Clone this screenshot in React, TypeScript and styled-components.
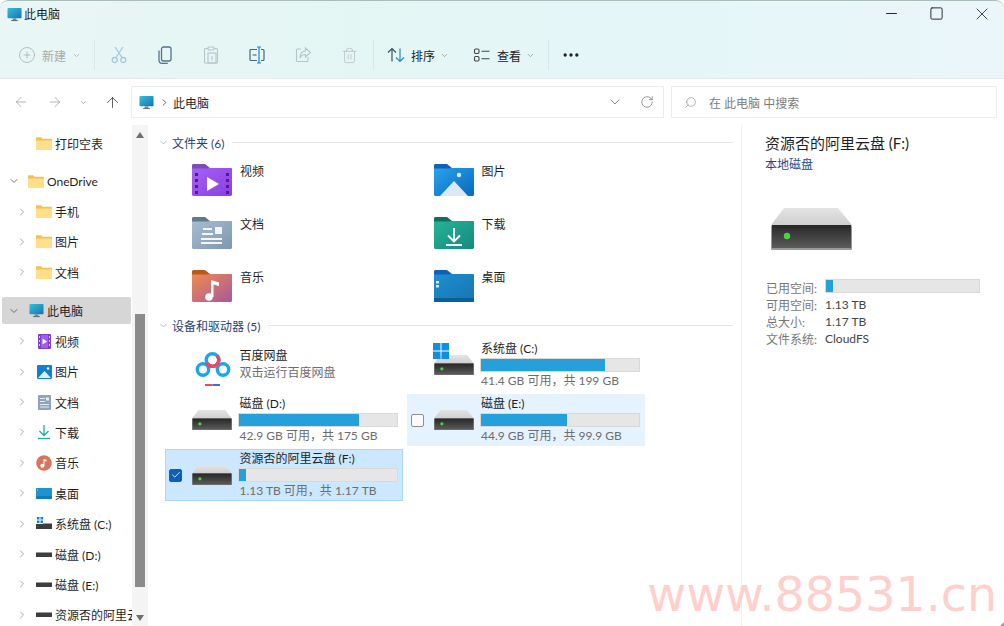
import React from 'react';
import styled, { createGlobalStyle } from 'styled-components';
import {
  ArrowLeft,
  ArrowRight,
  ArrowUp,
  Check,
  ChevronDown,
  ChevronRight,
  CirclePlus,
  Minus,
  MoreHorizontal,
  RotateCw,
  Search,
  Square,
  Trash2,
  X,
} from 'lucide-react';

const GlobalStyle = createGlobalStyle`
  html, body {
    margin: 0;
    padding: 0;
    background: #fff;
  }
  body {
    font-family: "Lato", "Noto Sans CJK SC", sans-serif;
    font-size: 12px;
    color: #1f1f1f;
    overflow: hidden;
  }
`;

const Window = styled.div`
  position: relative;
  width: 1004px;
  height: 626px;
  overflow: hidden;
  display: flex;
  flex-direction: column;
  background: #fff;
  border-radius: 8px 8px 0 0;
`;

const Chrome = styled.div`
  height: 79px;
  box-sizing: border-box;
  border-top: 1px solid #a9bdb9;
  border-bottom: 1px solid #e3e9e9;
  border-radius: 8px 8px 0 0;
  background: linear-gradient(90deg, #e9f6f6, #e4f6f4 35%, #e5f6f9 70%, #ebf6f9);
  display: flex;
  flex-direction: column;
`;

const TitleBar = styled.div`
  height: 27px;
  display: flex;
  align-items: center;
  padding-left: 7px;
  font-size: 12px;
`;

const TitleText = styled.span`
  flex: 1;
  margin: 0 0 2px 2px;
`;

const WindowButton = styled.div`
  width: 45px;
  height: 27px;
  margin-bottom: 2px;
  display: flex;
  align-items: center;
  justify-content: center;
  color: #222;
`;

const Toolbar = styled.div`
  flex: 1;
  display: flex;
  align-items: center;
  padding: 4px 0 0 18px;
`;

const Separator = styled.div<{ $left: number; $right: number }>`
  width: 1px;
  height: 30px;
  background: #dbe6e6;
  margin-left: ${(p) => p.$left}px;
  margin-right: ${(p) => p.$right}px;
`;

const NewButton = styled.div`
  display: flex;
  align-items: center;
  gap: 6px;
  color: #a3abad;
`;

const IconButton = styled.div<{ $color: string }>`
  width: 46px;
  height: 30px;
  display: flex;
  align-items: center;
  justify-content: center;
  color: ${(p) => p.$color};
`;

const TextButton = styled.div<{ $gapAfter: number }>`
  display: flex;
  align-items: center;
  gap: 6px;
  margin-right: ${(p) => p.$gapAfter}px;
  color: #222;
`;

const SmallChevron = styled(ChevronDown)`
  margin-left: -1px;
  color: #8a9496;
`;

const MoreButton = styled.div`
  margin-left: 12px;
  display: flex;
  color: #222;
`;

const AddressRow = styled.div`
  height: 46px;
  flex: none;
  display: flex;
  align-items: center;
  box-sizing: border-box;
  padding-right: 7px;
`;

const NavButtons = styled.div`
  width: 131px;
  height: 100%;
  flex: none;
  display: flex;
  align-items: center;
`;

const NavButton = styled.div<{ $width: number; $color: string }>`
  width: ${(p) => p.$width}px;
  display: flex;
  justify-content: center;
  color: ${(p) => p.$color};
`;

const AddressBar = styled.div`
  width: 533px;
  height: 32px;
  box-sizing: border-box;
  border: 1px solid #ececec;
  display: flex;
  align-items: center;
  padding-left: 7px;
  flex: none;
`;

const PathChevron = styled(ChevronRight)`
  margin: 0 3px 0 5px;
  color: #555;
`;

const PathText = styled.span`
  flex: 1;
`;

const AddressAction = styled.div<{ $width: number }>`
  width: ${(p) => p.$width}px;
  display: flex;
  justify-content: center;
  color: #6b6b6b;
`;

const SearchBox = styled.div`
  margin-left: 7px;
  flex: 1;
  height: 32px;
  box-sizing: border-box;
  border: 1px solid #ececec;
  display: flex;
  align-items: center;
  padding-left: 12px;
  gap: 12px;
  color: #7b7b7b;
`;

const FlippedSearch = styled(Search)`
  transform: scaleX(-1);
  color: #8a8a8a;
`;

const Body = styled.div`
  flex: 1;
  min-height: 0;
  display: flex;
`;

const Nav = styled.div`
  width: 132px;
  flex: none;
  overflow: hidden;
  padding-top: 3px;
  box-sizing: border-box;
`;

const NavRow = styled.div<{ $gap?: number }>`
  height: 30.4px;
  margin-top: ${(p) => p.$gap ?? 0}px;
  padding: 1.7px 1px 1.7px 2px;
  box-sizing: border-box;
`;

const NavInner = styled.div<{ $depth: number; $selected?: boolean }>`
  height: 100%;
  display: flex;
  align-items: center;
  padding-left: ${(p) => (p.$depth === 1 ? 14 : 6)}px;
  background: ${(p) => (p.$selected ? '#d6d6d6' : 'transparent')};
  border-radius: 2px;
  white-space: nowrap;
`;

const NavChevron = styled.div<{ $open?: boolean }>`
  width: 14px;
  flex: none;
  display: flex;
  color: ${(p) => (p.$open ? '#333' : '#6f6f6f')};
`;

const NavIcon = styled.div`
  width: 16px;
  height: 16px;
  flex: none;
  margin: 0 3px 0 6px;
  display: flex;
  align-items: center;
  justify-content: center;
`;

const ScrollTrack = styled.div`
  width: 16px;
  flex: none;
  background: #f4f4f4;
  display: flex;
  flex-direction: column;
  align-items: center;
  position: relative;
`;

const ScrollArrow = styled.div<{ $down?: boolean }>`
  margin-top: ${(p) => (p.$down ? 'auto' : '7px')};
  margin-bottom: ${(p) => (p.$down ? '5px' : '0')};
  width: 0;
  height: 0;
  border-left: 4px solid transparent;
  border-right: 4px solid transparent;
  border-bottom: ${(p) => (p.$down ? 'none' : '6px solid #6f6f6f')};
  border-top: ${(p) => (p.$down ? '6px solid #6f6f6f' : 'none')};
`;

const ScrollThumb = styled.div`
  margin-top: 176px;
  width: 10px;
  height: 273px;
  background: #8b8b8b;
`;

const Main = styled.div`
  width: 593px;
  flex: none;
  box-sizing: border-box;
  padding: 9px 8px 0 10px;
`;

const SectionHeader = styled.div<{ $after: number }>`
  height: 16px;
  display: flex;
  align-items: center;
  gap: 3px;
  margin-bottom: ${(p) => p.$after}px;
  color: #2b3f73;
`;

const SectionChevron = styled(ChevronDown)`
  color: #7b8190;
`;

const SectionLine = styled.div`
  flex: 1;
  height: 1px;
  background: #e4e4e4;
  margin-left: 5px;
`;

const TileGrid = styled.div<{ $rowGap: number }>`
  display: grid;
  grid-template-columns: 238px 238px;
  column-gap: 3.5px;
  row-gap: ${(p) => p.$rowGap}px;
  margin-left: 7px;
`;

const FolderTile = styled.div`
  height: 50px;
  display: flex;
  align-items: flex-start;
  gap: 8px;
  padding: 3px 0 0 27px;
  box-sizing: border-box;
  line-height: 15px;
`;

const DriveTile = styled.div<{ $state?: 'hover' | 'selected' }>`
  height: 52px;
  box-sizing: border-box;
  display: flex;
  align-items: center;
  border: 1px solid
    ${(p) => (p.$state === 'selected' ? '#a9d8fb' : p.$state === 'hover' ? '#e5f3ff' : 'transparent')};
  background: ${(p) => (p.$state === 'selected' ? '#cce8ff' : p.$state === 'hover' ? '#e5f3ff' : 'transparent')};
`;

const CheckSlot = styled.div`
  width: 26px;
  flex: none;
  padding-left: 3px;
  box-sizing: border-box;
`;

const CheckBox = styled.div<{ $checked?: boolean }>`
  width: 13px;
  height: 13px;
  box-sizing: border-box;
  border-radius: 2px;
  display: flex;
  align-items: center;
  justify-content: center;
  border: 1px solid ${(p) => (p.$checked ? '#0f5fb8' : '#8f8f8f')};
  background: ${(p) => (p.$checked ? '#0f5fb8' : '#fafafa')};
  color: #fff;
`;

const TileIcon = styled.div`
  position: relative;
  width: 40px;
  height: 50px;
  flex: none;
  margin-right: 7px;
  display: flex;
  align-items: center;
  justify-content: center;
`;

const WinBadge = styled.svg`
  position: absolute;
  left: -1px;
  top: 3px;
`;

const TileText = styled.div`
  width: 160px;
  flex: none;
  margin: -2px 0 0 -1px;
`;

const TileName = styled.div`
  height: 17px;
  line-height: 17px;
  margin-bottom: 1px;
  padding-left: 1.5px;
  white-space: nowrap;
`;

const Bar = styled.div<{ $width?: number; $height?: number }>`
  width: ${(p) => p.$width ?? 160}px;
  height: ${(p) => p.$height ?? 14}px;
  box-sizing: border-box;
  background: #e6e6e6;
  border: 1px solid #d9d9d9;
`;

const PropertyBar = styled(Bar)`
  align-self: start;
`;

const BarFill = styled.div`
  height: 100%;
  background: #26a0da;
`;

const TileSub = styled.div`
  height: 17px;
  line-height: 18px;
  padding-left: 1.5px;
  color: #6d6d6d;
  white-space: nowrap;
`;

const BaiduName = styled.div`
  line-height: 17px;
  padding-left: 1.5px;
`;

const BaiduSub = styled(BaiduName)`
  color: #6d6d6d;
`;

const Details = styled.div`
  flex: 1;
  border-left: 1px solid #f1f1f1;
  padding: 8px 0 0 23px;
`;

const DetailsTitle = styled.div`
  font-size: 15px;
  line-height: 20px;
`;

const DetailsType = styled.div`
  margin-top: 2px;
  line-height: 20px;
  color: #1f4a8a;
`;

const DetailsDrive = styled.div`
  margin: 33px 0 29px 6px;
  height: 42px;
`;

const Properties = styled.div`
  display: grid;
  grid-template-columns: 59px 155px;
  grid-auto-rows: 17px;
  align-items: center;
  margin-left: 1px;
`;

const PropertyName = styled.div`
  color: #777;
`;

const PropertyValue = styled.div`
  color: #444;
`;

const Watermark = styled.div`
  position: absolute;
  right: 7px;
  bottom: 5px;
  font-family: "DejaVu Sans", sans-serif;
  font-size: 47.5px;
  line-height: 52px;
  color: #ffd0cb;
  white-space: nowrap;
`;

const ResizeGrip = styled.div`
  position: absolute;
  right: 0;
  bottom: 0;
  width: 0;
  height: 0;
  border-left: 4px solid transparent;
  border-bottom: 4px solid #9a9a9a;
`;

// ---- drawn icons ----

const Computer = ({ size = 15 }: { size?: number }) => (
  <svg width={size} height={size} viewBox="0 0 16 16">
    <defs>
      <linearGradient id="screen" x1="0" y1="0" x2="1" y2="1">
        <stop offset="0" stopColor="#35c1d8" />
        <stop offset="1" stopColor="#1573b8" />
      </linearGradient>
    </defs>
    <rect x="0.5" y="1" width="15" height="11" rx="1" fill="url(#screen)" />
    <rect x="6" y="12" width="4" height="2" fill="#7b8a94" />
    <rect x="4.5" y="14" width="7" height="1" fill="#4f5d68" />
  </svg>
);

const SmallFolder = () => (
  <svg width="16" height="13" viewBox="0 0 16 13">
    <path d="M0 1.200C0 .6.4.2 1 .2h4l1.600 1.600H15c.6 0 1 .4 1 1V12c0 .6-.4 1-1 1H1c-.6 0-1-.4-1-1z" fill="#f4c04f" />
    <path d="M0 3.600h15c.6 0 1 .4 1 1V12c0 .6-.4 1-1 1H1c-.6 0-1-.4-1-1z" fill="#ffdf8a" />
  </svg>
);

const SmallVideo = () => (
  <svg width="13" height="15" viewBox="0 0 13 15">
    <rect width="13" height="15" rx="1" fill="#7b3fd0" />
    <rect x="3" y="1" width="7" height="13" fill="#a45cf0" />
    <path d="M4.500 4.500l4.500 3-4.500 3z" fill="#fff" />
    <path d="M1 2h1v2H1zm0 4h1v2H1zm0 4h1v2H1zm10-8h1v2h-1zm0 4h1v2h-1zm0 4h1v2h-1z" fill="#e4d4fa" />
  </svg>
);

const SmallPicture = () => (
  <svg width="15" height="14" viewBox="0 0 15 14">
    <rect width="15" height="14" rx="1" fill="#0f7fd0" />
    <path d="M1 13l6.500-7 6.500 7z" fill="#dfeefa" />
    <circle cx="11" cy="3.500" r="1.200" fill="#fff" />
  </svg>
);

const SmallDocument = () => (
  <svg width="13" height="15" viewBox="0 0 13 15">
    <rect width="13" height="15" rx="1" fill="#8fa3bd" />
    <path d="M2 3h5v1H2zm0 3h5v1H2zm0 3h9v1H2zm0 2.500h9v1H2z" fill="#e6edf5" />
    <rect x="8" y="2.500" width="3" height="3" fill="#e6edf5" />
  </svg>
);

const SmallDownload = () => (
  <svg width="16" height="16" viewBox="0 0 16 16" fill="none" stroke="#22a9a0" strokeWidth="1.300">
    <path d="M8 1v10M3.500 7L8 11.500 12.500 7" />
    <path d="M2 14.500h12" />
  </svg>
);

const SmallMusic = () => (
  <svg width="16" height="16" viewBox="0 0 16 16">
    <circle cx="8" cy="8" r="7.800" fill="#d9755f" />
    <circle cx="6.300" cy="10.800" r="2" fill="#fff" />
    <path d="M7.500 10.800V4l3 .8v1.700l-2-.5v4.800z" fill="#fff" />
  </svg>
);

const SmallDesktop = () => (
  <svg width="16" height="11" viewBox="0 0 16 11">
    <rect width="16" height="11" rx="0.500" fill="#1f93cf" />
    <rect y="8" width="16" height="3" fill="#157bb4" />
    <rect x="1" y="1.500" width="1" height="1" fill="#bfe6f7" />
  </svg>
);

const SmallDrive = () => (
  <svg width="16" height="5" viewBox="0 0 16 5">
    <rect width="16" height="5" rx="0.500" fill="#3e3e3e" />
    <rect width="16" height="1" fill="#9b9b9b" />
  </svg>
);

const SmallSystemDrive = () => (
  <svg width="16" height="13" viewBox="0 0 16 13">
    <path d="M1 0h2.500v2.500H1zm3.500 0H7v2.500H4.500zM1 3.500h2.500V6H1zm3.500 0H7V6H4.500z" fill="#1580cf" />
    <rect y="7" width="16" height="5" fill="#3e3e3e" />
    <rect x="7" y="6" width="9" height="1" fill="#9b9b9b" />
  </svg>
);

const Drive = ({ width, id }: { width: number; id: string }) => (
  <svg width={width} height={(width * 42) / 81} viewBox="0 0 81 42">
    <defs>
      <linearGradient id={`front-${id}`} x1="0" y1="0" x2="0" y2="1">
        <stop offset="0" stopColor="#262626" />
        <stop offset="1" stopColor="#5c5c5c" />
      </linearGradient>
      <linearGradient id={`top-${id}`} x1="0" y1="0" x2="0" y2="1">
        <stop offset="0" stopColor="#e4e4e4" />
        <stop offset="1" stopColor="#cfcfcf" />
      </linearGradient>
    </defs>
    <path d="M13 0h54l14 17H0z" fill={`url(#top-${id})`} />
    <rect x="0" y="17" width="81" height="25" rx="1.500" fill="#9a9a9a" />
    <rect x="1" y="17" width="79" height="23" fill={`url(#front-${id})`} />
    <circle cx="16" cy="28" r="3.200" fill="#46d63f" />
  </svg>
);

const FolderArt = ({
  id,
  tab,
  from,
  to,
  children,
}: {
  id: string;
  tab: string;
  from: string;
  to: string;
  children: React.ReactNode;
}) => (
  <svg width="40" height="32" viewBox="0 0 40 32">
    <defs>
      <linearGradient id={id} x1="0" y1="0" x2="1" y2="1">
        <stop offset="0" stopColor={from} />
        <stop offset="1" stopColor={to} />
      </linearGradient>
    </defs>
    <path d="M0 1.500C0 .7.700 0 1.500 0H13l5 4h20.500c.8 0 1.500.7 1.500 1.500V10H0z" fill={tab} />
    <path
      d="M0 4.500h18l-2.500-.5h23c.8 0 1.500.7 1.500 1.500v25c0 .8-.7 1.500-1.500 1.500h-37C.7 32 0 31.300 0 30.500z"
      fill={`url(#${id})`}
    />
    {children}
  </svg>
);

const VideoFolder = () => (
  <FolderArt id="fv" tab="#7a4cc0" from="#a860f5" to="#8a3fe0">
    <path d="M15 13l12 7-12 7z" fill="#fff" />
    <path
      d="M3 9h3v3H3zm0 6h3v3H3zm0 6h3v3H3zm0 6h3v3H3zm31-18h3v3h-3zm0 6h3v3h-3zm0 6h3v3h-3zm0 6h3v3h-3z"
      fill="#4a1f8c"
    />
  </FolderArt>
);

const PictureFolder = () => (
  <FolderArt id="fp" tab="#0d62b8" from="#2aa3ea" to="#0668c0">
    <path d="M6 32L20 17l14 15z" fill="#dbe8f5" />
    <circle cx="25" cy="11" r="2.200" fill="#d8eefb" />
  </FolderArt>
);

const DocumentFolder = () => (
  <FolderArt id="fd" tab="#5f7a8e" from="#a7bccf" to="#7d97b3">
    <path d="M11 11h9v2h-9zm-1 5h11v2H10zm-1 5h21v2H9zm0 4h21v2H9z" fill="#f2f6fa" />
    <rect x="23" y="10" width="7" height="7" fill="#f2f6fa" />
  </FolderArt>
);

const DownloadFolder = () => (
  <FolderArt id="fl" tab="#0f6f5f" from="#26b395" to="#168a80">
    <path d="M20 11v13M14 18.500l6 6 6-6M12 28h16" fill="none" stroke="#fff" strokeWidth="1.800" />
  </FolderArt>
);

const MusicFolder = () => (
  <FolderArt id="fm" tab="#b9591a" from="#f08a50" to="#a8589a">
    <circle cx="17" cy="27" r="3.800" fill="#fff" />
    <path d="M19 27V10l8 2.500v3.500l-5.500-1.500V27z" fill="#fff" />
  </FolderArt>
);

const DesktopFolder = () => (
  <FolderArt id="fk" tab="#0d62b8" from="#1f8fd0" to="#1675b0">
    <rect x="0" y="28" width="40" height="4" fill="#0e5f98" />
    <path d="M2 11h3v2.500H2zm0 4h3v2.500H2z" fill="#cdeaf8" />
  </FolderArt>
);

const BaiduLogo = () => (
  <svg width="40" height="50" viewBox="0 0 40 50" fill="none">
    <circle cx="11" cy="29.500" r="5.700" stroke="#18a7ee" strokeWidth="3.400" />
    <circle cx="31" cy="29.500" r="5.700" stroke="#18a7ee" strokeWidth="3.400" />
    <circle cx="20.500" cy="20" r="6.300" stroke="#18a7ee" strokeWidth="3.400" />
    <path d="M14.700 22.500a6.300 6.300 0 0 0 11.600 0" stroke="#f0455b" strokeWidth="3.400" />
    <path d="M25 15.600a6.300 6.300 0 0 1 1.300 6.900" stroke="#f0455b" strokeWidth="3.400" />
    <path d="M13 45h7.500" stroke="#f0455b" strokeWidth="2" />
    <path d="M20.500 45H28" stroke="#3f6fd8" strokeWidth="2" />
  </svg>
);

const CutIcon = () => (
  <svg width="18" height="18" viewBox="0 0 18 18" fill="none" stroke="currentColor" strokeWidth="1.300">
    <circle cx="4.700" cy="14" r="2.500" />
    <circle cx="13.300" cy="14" r="2.500" />
    <path d="M5.800 11.800L13 1M12.200 11.800L5 1" />
  </svg>
);

const CopyIcon = () => (
  <svg width="18" height="18" viewBox="0 0 18 18" fill="none" stroke="currentColor" strokeWidth="1.300">
    <rect x="5.500" y="1" width="9.500" height="14" rx="2" />
    <path d="M3 4.500V14c0 2 1.300 3.300 3.300 3.300h5.500" />
  </svg>
);

const PasteIcon = () => (
  <svg width="18" height="18" viewBox="0 0 18 18" fill="none" stroke="currentColor" strokeWidth="1.100">
    <path d="M6 2.500H3.500a1 1 0 0 0-1 1V16a1 1 0 0 0 1 1h11a1 1 0 0 0 1-1V3.500a1 1 0 0 0-1-1H12" />
    <rect x="6" y="1" width="6" height="3" rx="0.800" />
    <rect x="6" y="7" width="8" height="10" />
    <path d="M10 10v4.500" />
  </svg>
);

const RenameIcon = () => (
  <svg width="18" height="18" viewBox="0 0 18 18" fill="none" strokeWidth="1.200">
    <path d="M9 3.500H3a1 1 0 0 0-1 1v9a1 1 0 0 0 1 1h6M13 3.500h2a1 1 0 0 1 1 1v9a1 1 0 0 1-1 1h-2" stroke="#4a6478" />
    <path d="M4.500 9h4" stroke="#4a6478" />
    <path d="M11 1v16M9 1h4M9 17h4" stroke="#1c86c8" />
  </svg>
);

const ShareIcon = () => (
  <svg width="18" height="18" viewBox="0 0 18 18" fill="none" stroke="currentColor" strokeWidth="1.100">
    <path d="M7 3H3.500a1 1 0 0 0-1 1v10.500a1 1 0 0 0 1 1H13a1 1 0 0 0 1-1V11" />
    <path d="M11.500 2l5 4.500-5 4.500V8.500C9 8.500 7 9.500 6 12c0-4 2-6.800 5.500-7z" />
  </svg>
);

const SortIcon = () => (
  <svg width="18" height="18" viewBox="0 0 18 18" fill="none" strokeWidth="1.200">
    <path d="M5 15.500V2.500M1 6.500l4-4 4 4" stroke="#3f4f5c" />
    <path d="M13 2.500v13M9 11.500l4 4 4-4" stroke="#2a86d0" />
  </svg>
);

const ViewIcon = () => (
  <svg width="18" height="18" viewBox="0 0 18 18" fill="none" stroke="#444" strokeWidth="1.100">
    <rect x="1.500" y="3" width="4.500" height="4.500" rx="1.200" />
    <rect x="1.500" y="10.500" width="4.500" height="4.500" rx="1.200" />
    <path d="M8.500 5.200h8M8.500 12.700h8" />
  </svg>
);

const folders = [
  { name: '视频', icon: <VideoFolder /> },
  { name: '图片', icon: <PictureFolder /> },
  { name: '文档', icon: <DocumentFolder /> },
  { name: '下载', icon: <DownloadFolder /> },
  { name: '音乐', icon: <MusicFolder /> },
  { name: '桌面', icon: <DesktopFolder /> },
];

const navItems: {
  name: string;
  depth: number;
  icon: React.ReactNode;
  open?: boolean;
  selected?: boolean;
  gap?: number;
  noChevron?: boolean;
}[] = [
  { name: '打印空表', depth: 1, icon: <SmallFolder />, noChevron: true },
  { name: 'OneDrive', depth: 0, icon: <SmallFolder />, open: true, gap: 7.6 },
  { name: '手机', depth: 1, icon: <SmallFolder /> },
  { name: '图片', depth: 1, icon: <SmallFolder /> },
  { name: '文档', depth: 1, icon: <SmallFolder /> },
  { name: '此电脑', depth: 0, icon: <Computer />, open: true, selected: true, gap: 8.2 },
  { name: '视频', depth: 1, icon: <SmallVideo /> },
  { name: '图片', depth: 1, icon: <SmallPicture /> },
  { name: '文档', depth: 1, icon: <SmallDocument /> },
  { name: '下载', depth: 1, icon: <SmallDownload /> },
  { name: '音乐', depth: 1, icon: <SmallMusic /> },
  { name: '桌面', depth: 1, icon: <SmallDesktop /> },
  { name: '系统盘 (C:)', depth: 1, icon: <SmallSystemDrive /> },
  { name: '磁盘 (D:)', depth: 1, icon: <SmallDrive /> },
  { name: '磁盘 (E:)', depth: 1, icon: <SmallDrive /> },
  { name: '资源否的阿里云盘 (F:)', depth: 1, icon: <SmallDrive /> },
];

const drives: {
  id: string;
  name: string;
  sub: string;
  used: number;
  state?: 'hover' | 'selected';
  windows?: boolean;
}[] = [
  { id: 'c', name: '系统盘 (C:)', sub: '41.4 GB 可用，共 199 GB', used: 79, windows: true },
  { id: 'd', name: '磁盘 (D:)', sub: '42.9 GB 可用，共 175 GB', used: 76 },
  { id: 'e', name: '磁盘 (E:)', sub: '44.9 GB 可用，共 99.9 GB', used: 55, state: 'hover' },
  { id: 'f', name: '资源否的阿里云盘 (F:)', sub: '1.13 TB 可用，共 1.17 TB', used: 4.5, state: 'selected' },
];

export default function App() {
  return (
    <Window>
      <GlobalStyle />
      <Chrome>
        <TitleBar>
          <Computer />
          <TitleText>此电脑</TitleText>
          <WindowButton>
            <Minus size={17} strokeWidth={1.4} />
          </WindowButton>
          <WindowButton>
            <Square size={15} strokeWidth={1.5} />
          </WindowButton>
          <WindowButton>
            <X size={20} strokeWidth={1} />
          </WindowButton>
        </TitleBar>
        <Toolbar>
          <NewButton>
            <CirclePlus size={18} strokeWidth={1} />
            <span>新建</span>
            <ChevronDown size={9} />
          </NewButton>
          <Separator $left={13} $right={1} />
          <IconButton $color="#a9c9dc">
            <CutIcon />
          </IconButton>
          <IconButton $color="#56728c">
            <CopyIcon />
          </IconButton>
          <IconButton $color="#b6c4cb">
            <PasteIcon />
          </IconButton>
          <IconButton $color="#4a6478">
            <RenameIcon />
          </IconButton>
          <IconButton $color="#b6c4cb">
            <ShareIcon />
          </IconButton>
          <IconButton $color="#b6bfc4">
            <Trash2 size={17} strokeWidth={1.1} />
          </IconButton>
          <Separator $left={1} $right={13} />
          <TextButton $gapAfter={24}>
            <SortIcon />
            <span>排序</span>
            <SmallChevron size={9} />
          </TextButton>
          <TextButton $gapAfter={13}>
            <ViewIcon />
            <span>查看</span>
            <SmallChevron size={9} />
          </TextButton>
          <Separator $left={0} $right={0} />
          <MoreButton>
            <MoreHorizontal size={20} strokeWidth={2} />
          </MoreButton>
        </Toolbar>
      </Chrome>
      <AddressRow>
        <NavButtons>
          <NavButton $width={42} $color="#9a9a9a">
            <ArrowLeft size={16} strokeWidth={1.1} />
          </NavButton>
          <NavButton $width={26} $color="#9a9a9a">
            <ArrowRight size={16} strokeWidth={1.1} />
          </NavButton>
          <NavButton $width={30} $color="#9a9a9a">
            <ChevronDown size={9} />
          </NavButton>
          <NavButton $width={29} $color="#333">
            <ArrowUp size={17} strokeWidth={1.1} />
          </NavButton>
        </NavButtons>
        <AddressBar>
          <Computer />
          <PathChevron size={11} />
          <PathText>此电脑</PathText>
          <AddressAction $width={32}>
            <ChevronDown size={16} strokeWidth={1.2} />
          </AddressAction>
          <AddressAction $width={32}>
            <RotateCw size={14} strokeWidth={1.2} />
          </AddressAction>
        </AddressBar>
        <SearchBox>
          <FlippedSearch size={13} strokeWidth={1.2} />
          在 此电脑 中搜索
        </SearchBox>
      </AddressRow>
      <Body>
        <Nav>
          {navItems.map((item) => (
            <NavRow key={item.name + item.depth + item.gap} $gap={item.gap}>
              <NavInner $depth={item.depth} $selected={item.selected}>
                <NavChevron $open={item.open}>
                  {!item.noChevron &&
                    (item.open ? (
                      <ChevronDown size={12} strokeWidth={1.3} />
                    ) : (
                      <ChevronRight size={12} strokeWidth={1.2} />
                    ))}
                </NavChevron>
                <NavIcon>{item.icon}</NavIcon>
                {item.name}
              </NavInner>
            </NavRow>
          ))}
        </Nav>
        <ScrollTrack>
          <ScrollArrow />
          <ScrollThumb />
          <ScrollArrow $down />
        </ScrollTrack>
        <Main>
          <SectionHeader $after={11}>
            <SectionChevron size={11} strokeWidth={1.2} />
            文件夹 (6)
            <SectionLine />
          </SectionHeader>
          <TileGrid $rowGap={3}>
            {folders.map((folder) => (
              <FolderTile key={folder.name}>
                {folder.icon}
                {folder.name}
              </FolderTile>
            ))}
          </TileGrid>
          <SectionHeader $after={6}>
            <SectionChevron size={11} strokeWidth={1.2} />
            设备和驱动器 (5)
            <SectionLine />
          </SectionHeader>
          <TileGrid $rowGap={3}>
            <DriveTile>
              <CheckSlot />
              <TileIcon>
                <BaiduLogo />
              </TileIcon>
              <TileText>
                <BaiduName>百度网盘</BaiduName>
                <BaiduSub>双击运行百度网盘</BaiduSub>
              </TileText>
            </DriveTile>
            {drives.map((drive) => (
              <DriveTile key={drive.id} $state={drive.state}>
                <CheckSlot>
                  {drive.state && (
                    <CheckBox $checked={drive.state === 'selected'}>
                      {drive.state === 'selected' && <Check size={10} strokeWidth={2} />}
                    </CheckBox>
                  )}
                </CheckSlot>
                <TileIcon>
                  {drive.windows && (
                    <WinBadge width="16" height="16" viewBox="0 0 16 16">
                      <path d="M0 0h7.500v7.500H0zm8.500 0H16v7.500H8.500zM0 8.500h7.500V16H0zm8.500 0H16V16H8.500z" fill="#0f8fe0" />
                    </WinBadge>
                  )}
                  <Drive width={40} id={drive.id} />
                </TileIcon>
                <TileText>
                  <TileName>{drive.name}</TileName>
                  <Bar>
                    <BarFill style={{ width: `${drive.used}%` }} />
                  </Bar>
                  <TileSub>{drive.sub}</TileSub>
                </TileText>
              </DriveTile>
            ))}
          </TileGrid>
        </Main>
        <Details>
          <DetailsTitle>资源否的阿里云盘 (F:)</DetailsTitle>
          <DetailsType>本地磁盘</DetailsType>
          <DetailsDrive>
            <Drive width={81} id="details" />
          </DetailsDrive>
          <Properties>
            <PropertyName>已用空间:</PropertyName>
            <PropertyBar $width={155} $height={14}>
              <BarFill style={{ width: '4.5%' }} />
            </PropertyBar>
            <PropertyName>可用空间:</PropertyName>
            <PropertyValue>1.13 TB</PropertyValue>
            <PropertyName>总大小:</PropertyName>
            <PropertyValue>1.17 TB</PropertyValue>
            <PropertyName>文件系统:</PropertyName>
            <PropertyValue>CloudFS</PropertyValue>
          </Properties>
        </Details>
      </Body>
      <Watermark>www.88531.cn</Watermark>
      <ResizeGrip />
    </Window>
  );
}
